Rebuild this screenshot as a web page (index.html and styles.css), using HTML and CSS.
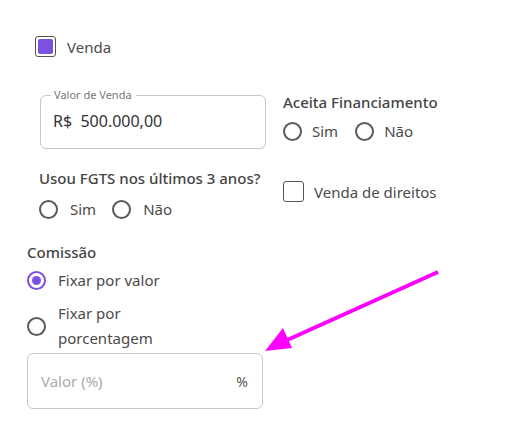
FILE: index.html
```html
<!DOCTYPE html>
<html lang="pt-BR">
<head>
<meta charset="utf-8">
<link rel="stylesheet" href="styles.css">
</head>
<body>
<div class="page">
  <label class="check top-check">
    <span class="box checked"></span>
    <span class="lbl">Venda</span>
  </label>

  <div class="grid">
    <fieldset class="outlined">
      <legend>Valor de Venda</legend>
      <div class="value">R$&nbsp; 500.000,00</div>
    </fieldset>

    <div class="group group-right">
      <div class="title">Aceita Financiamento</div>
      <div class="radios">
        <span class="radio"></span><span class="rlbl">Sim</span>
        <span class="radio"></span><span class="rlbl">Não</span>
      </div>
    </div>

    <div class="group group-fgts">
      <div class="title">Usou FGTS nos últimos 3 anos?</div>
      <div class="radios">
        <span class="radio"></span><span class="rlbl">Sim</span>
        <span class="radio"></span><span class="rlbl">Não</span>
      </div>
    </div>

    <label class="check direitos">
      <span class="box"></span>
      <span class="lbl">Venda de direitos</span>
    </label>
  </div>

  <div class="comissao">
    <div class="title">Comissão</div>
    <div class="opt opt-1">
      <span class="radio selected"></span>
      <span class="olbl">Fixar por valor</span>
    </div>
    <div class="opt opt-2">
      <span class="radio"></span>
      <span class="olbl">Fixar por<br>porcentagem</span>
    </div>
    <div class="input">
      <span class="ph">Valor (%)</span>
      <span class="suffix">%</span>
    </div>
  </div>

  <svg class="arrow" width="505" height="445" viewBox="0 0 505 445">
    <line x1="438" y1="272" x2="285" y2="341" stroke="#ff00ff" stroke-width="4"/>
    <polygon points="265,351 283,328 292,348" fill="#ff00ff"/>
  </svg>
</div>
</body>
</html>
```

FILE: styles.css
```css
* { box-sizing: border-box; }
html, body { margin: 0; padding: 0; background: #fff; }
body {
  font-family: "Noto Sans", "Liberation Sans", sans-serif;
  color: #4a4a4a;
  width: 505px;
  height: 445px;
  overflow: hidden;
}
.page { position: relative; width: 505px; height: 445px; padding-top: 36px; }

.check { display: flex; align-items: center; }
.box {
  width: 21px; height: 21px;
  border: 1.5px solid #555;
  border-radius: 3px;
  flex: none;
  position: relative;
}
.box.checked::after {
  content: "";
  position: absolute;
  left: 2px; top: 2px; right: 2px; bottom: 2px;
  background: #7b52e0;
  border-radius: 2px;
}
.lbl { font-size: 15px; margin-left: 10px; color: #4a4a4a; }
.top-check { margin-left: 35px; height: 21px; }
.top-check .lbl { margin-left: 11px; }

.grid {
  display: grid;
  grid-template-columns: 227px 1fr;
  column-gap: 17px;
  margin-left: 39px;
  margin-top: 37px;
}

.outlined {
  margin: 0 0 0 1px;
  padding: 0 12px 0 12px;
  border: 1px solid #c8c8c8;
  border-radius: 6px;
  height: 60px;
  margin-top: -5px;
  width: 226px;
}
.outlined legend {
  font-size: 11px;
  color: #777;
  padding: 0 4px 0 3px;
  margin-left: -2px;
  line-height: 12px;
}
.value { font-size: 16px; color: #333; margin-top: 9px; }

.title { font-size: 15px; font-weight: 500; color: #444; line-height: 18px; }
.radios { display: flex; align-items: center; margin-top: 10px; }
.radio {
  width: 19px; height: 19px;
  border: 2px solid #5a5a5a;
  border-radius: 50%;
  flex: none;
  position: relative;
}
.radio.selected { border-color: #7b52e0; }
.radio.selected::after {
  content: "";
  position: absolute;
  left: 3px; top: 3px;
  width: 9px; height: 9px;
  border-radius: 50%;
  background: #7b52e0;
}
.rlbl { font-size: 15px; margin-left: 10px; margin-right: 17px; color: #4a4a4a; }

.group-right { margin-top: -1px; }
.group-fgts { margin-top: 20px; }
.group-fgts .radios { margin-top: 12px; }
.group-fgts .rlbl { margin-left: 12px; margin-right: 16px; }
.direitos { margin-top: 32px; align-self: start; }

.comissao { margin-left: 27px; margin-top: 24px; width: 236px; }
.opt { display: flex; align-items: center; }
.olbl { font-size: 15px; margin-left: 12px; line-height: 25px; color: #4a4a4a; }
.opt-1 { margin-top: 7px; }
.opt-2 { margin-top: 8px; }

.input {
  margin-top: 2px;
  height: 56px;
  border: 1px solid #c8c8c8;
  border-radius: 6px;
  display: flex;
  align-items: center;
  justify-content: space-between;
  padding: 0 14px 0 13px;
}
.ph { font-size: 15px; color: #aaa; }
.suffix { font-size: 14px; color: #555; }

.arrow { position: absolute; left: 0; top: 0; pointer-events: none; }
```
